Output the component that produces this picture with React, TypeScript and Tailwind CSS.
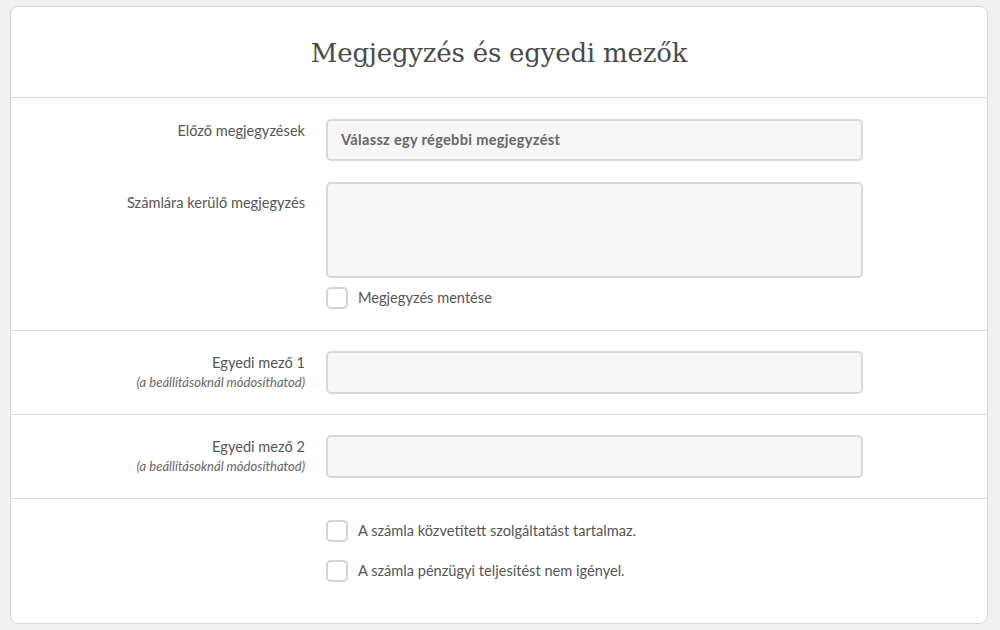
import React from 'react';

const sans = "font-['Lato','Open_Sans',sans-serif]";

function Checkbox({ label }: { label: string }) {
  return (
    <label className="flex items-center gap-[10px] cursor-pointer">
      <span className="w-[22px] h-[22px] rounded-[5px] border-2 border-[#d4d4d4] bg-white shrink-0" />
      <span className="text-[14.6px] text-[#555]">{label}</span>
    </label>
  );
}

function Row({
  label,
  hint,
  pad,
  children,
}: {
  label?: string;
  hint?: string;
  pad: string;
  children: React.ReactNode;
}) {
  return (
    <div className="flex gap-[21px]">
      <div className={`w-[294px] shrink-0 text-right ${pad}`}>
        {label && <div className="text-[14.6px] text-[#555] leading-[20px]">{label}</div>}
        {hint && <div className="text-[13px] italic text-[#666] leading-[16px] mt-[1px]">{hint}</div>}
      </div>
      <div className="w-[537px]">{children}</div>
    </div>
  );
}

export default function App() {
  return (
    <div className={`min-h-[630px] bg-[#f1f1f1] pt-[6px] pl-[10px] pr-[12px] pb-[6px] ${sans}`}>
      <div className="bg-white border border-[#d6d6d6] rounded-[8px] h-[618px] flex flex-col">
        {/* header */}
        <div className="h-[91px] flex items-center justify-center border-b border-[#d6d6d6] pt-[3px]">
          <h1 className="font-['DejaVu_Serif',serif] text-[26px] text-[#4a4a4a] tracking-[-0.2px]">
            Megjegyzés és egyedi mezők
          </h1>
        </div>

        {/* notes */}
        <div className="pt-[21px] pb-[21px] border-b border-[#dcdcdc] flex flex-col gap-[21px]">
          <Row label="Előző megjegyzések" pad="pt-[2px]">
            <div className="h-[42px] rounded-[5px] border-2 border-[#d8d8d8] bg-[#f7f7f7] flex items-center px-[13px]">
              <span className="text-[14.6px] font-bold text-[#666] tracking-[0.3px]">Válassz egy régebbi megjegyzést</span>
            </div>
          </Row>
          <Row label="Számlára kerülő megjegyzés" pad="pt-[11px]">
            <div className="h-[96px] rounded-[5px] border-2 border-[#d8d8d8] bg-[#f7f7f7]" />
            <div className="mt-[9px]">
              <Checkbox label="Megjegyzés mentése" />
            </div>
          </Row>
        </div>

        {/* custom field 1 */}
        <div className="pt-[20px] pb-[20px] border-b border-[#dcdcdc]">
          <Row label="Egyedi mező 1" hint="(a beállításoknál módosíthatod)" pad="pt-[2px]">
            <div className="h-[43px] rounded-[5px] border-2 border-[#d8d8d8] bg-[#f7f7f7]" />
          </Row>
        </div>

        {/* custom field 2 */}
        <div className="pt-[20px] pb-[20px] border-b border-[#dcdcdc]">
          <Row label="Egyedi mező 2" hint="(a beállításoknál módosíthatod)" pad="pt-[2px]">
            <div className="h-[43px] rounded-[5px] border-2 border-[#d8d8d8] bg-[#f7f7f7]" />
          </Row>
        </div>

        {/* flags */}
        <div className="pt-[21px] flex">
          <div className="ml-[315px] flex flex-col gap-[18px]">
            <Checkbox label="A számla közvetített szolgáltatást tartalmaz." />
            <Checkbox label="A számla pénzügyi teljesítést nem igényel." />
          </div>
        </div>
      </div>
    </div>
  );
}
